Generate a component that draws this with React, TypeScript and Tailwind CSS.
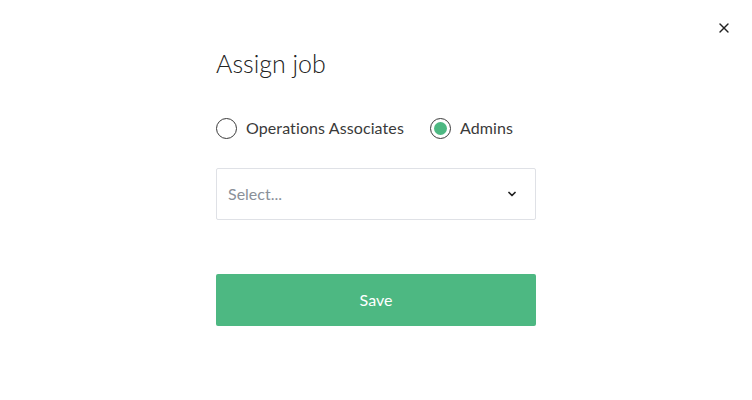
import { X, ChevronDown } from 'lucide-react'

function Radio({ label, checked }: { label: string; checked?: boolean }) {
  return (
    <label className="flex items-center gap-[9px] cursor-pointer">
      <span className="w-[21px] h-[21px] rounded-full border-[1.5px] border-[#3a3a3a] flex items-center justify-center">
        {checked && <span className="w-[13px] h-[13px] rounded-full bg-[#4db882]" />}
      </span>
      <span className="text-[16px] text-[#3a3a3a] tracking-[0.1px]">{label}</span>
    </label>
  )
}

export default function App() {
  return (
    <div
      className="relative w-[752px] h-[400px] bg-white"
      style={{ fontFamily: 'Lato, "Noto Sans", sans-serif' }}
    >
      <button className="absolute right-[20px] top-[20px] text-[#222]">
        <X size={16} strokeWidth={2} />
      </button>

      <div className="w-[320px] mx-auto pt-[47px]">
        <h1 className="text-[25px] leading-[32px] text-[#222] font-light">Assign job</h1>

        <div className="flex items-center gap-[26px] mt-[37px]">
          <Radio label="Operations Associates" />
          <Radio label="Admins" checked />
        </div>

        <div className="mt-[28px] h-[52px] border border-[#dfe1e6] rounded-[2px] flex items-center justify-between pl-[11px] pr-[17px]">
          <span className="text-[16px] text-[#8a9099]">Select...</span>
          <ChevronDown size={12} strokeWidth={3.5} className="text-[#222]" />
        </div>

        <button className="mt-[54px] w-full h-[52px] rounded-[2px] bg-[#4db882] text-white text-[16px]">
          Save
        </button>
      </div>
    </div>
  )
}
